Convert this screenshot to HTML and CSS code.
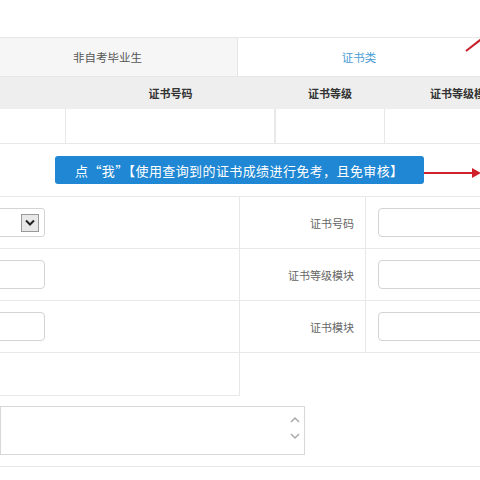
FILE: index.html
```
<!DOCTYPE html>
<html lang="zh">
<head>
    <meta charset="UTF-8">
    <title>证书类免考</title>
    <link rel="stylesheet" href="styles.css">
</head>
<body>
    <div class="page">
        <!-- 标签页 -->
        <div class="tabs">
            <div class="tab">非自考毕业生</div>
            <div class="tab tab-active">证书类</div>
        </div>

        <!-- 查询结果表 -->
        <div class="grid-row grid-head">
            <div class="c1"></div>
            <div class="c2">证书号码</div>
            <div class="c3">证书等级</div>
            <div class="c4">证书等级模块</div>
        </div>
        <div class="grid-row grid-data">
            <div class="c1"></div>
            <div class="c2"></div>
            <div class="c3"></div>
            <div class="c4"></div>
        </div>

        <div class="banner-wrap">
            <div class="banner">点“我”【使用查询到的证书成绩进行免考，且免审核】</div>
        </div>

        <!-- 表单 -->
        <div class="form">
            <div class="form-row">
                <div class="left-cell">
                    <div class="fake-select">
                        <span class="select-btn">
                            <svg width="10" height="7" viewBox="0 0 10 7"><path d="M1 1.5 L5 5.5 L9 1.5" fill="none" stroke="#222" stroke-width="2"/></svg>
                        </span>
                    </div>
                </div>
                <div class="label-cell">证书号码</div>
                <div class="input-cell"><div class="box"></div></div>
            </div>
            <div class="form-row">
                <div class="left-cell"><div class="box box-left"></div></div>
                <div class="label-cell">证书等级模块</div>
                <div class="input-cell"><div class="box"></div></div>
            </div>
            <div class="form-row">
                <div class="left-cell"><div class="box box-left"></div></div>
                <div class="label-cell">证书模块</div>
                <div class="input-cell"><div class="box"></div></div>
            </div>
            <div class="extra-row"></div>
        </div>

        <div class="memo">
            <div class="memo-box">
                <span class="memo-arrows">
                    <svg width="12" height="30" viewBox="0 0 12 30">
                        <path d="M2 9 L6 5 L10 9" fill="none" stroke="#aaa" stroke-width="1.5"/>
                        <path d="M2 21 L6 25 L10 21" fill="none" stroke="#aaa" stroke-width="1.5"/>
                    </svg>
                </span>
            </div>
        </div>
        <div class="bottom-line"></div>

        <!-- 红色箭头标注 -->
        <svg class="marks" width="480" height="480" viewBox="0 0 480 480">
            <path d="M466 51 L484 37" stroke="#c8202a" stroke-width="2" fill="none"/>
            <path d="M424 173 L474 173" stroke="#d0202a" stroke-width="2" fill="none"/>
            <path d="M472 168 L481 173 L472 178 Z" fill="#d0202a"/>
        </svg>
    </div>
</body>
</html>
```

FILE: styles.css
```
* {
    margin: 0;
    padding: 0;
    box-sizing: border-box;
}

body {
    font-family: "Noto Sans CJK SC", "Liberation Sans", sans-serif;
    background-color: #fff;
    color: #555;
    width: 480px;
    height: 480px;
    overflow: hidden;
}

.page {
    position: relative;
    width: 480px;
    height: 480px;
    padding-top: 37px;
}

/* 标签页 */
.tabs {
    display: flex;
    height: 40px;
    border-top: 1px solid #e6e6e6;
    border-bottom: 1px solid #e6e6e6;
}

.tab {
    width: 238px;
    background-color: #f6f6f6;
    border-right: 1px solid #e6e6e6;
    display: flex;
    align-items: center;
    justify-content: center;
    padding-right: 22px;
    font-size: 11.5px;
    color: #555;
}

.tab-active {
    flex: 1;
    background-color: #fff;
    border-right: none;
    padding-right: 0;
    color: #4a9cd3;
}

/* 查询结果表 */
.grid-row {
    display: grid;
    grid-template-columns: 66px 209px 110px 156px;
    width: 541px;
}

.grid-head {
    height: 32px;
    background-color: #eeeeee;
    font-weight: bold;
    font-size: 11px;
    color: #333;
}

.grid-head div {
    display: flex;
    align-items: center;
    justify-content: center;
}

.grid-data {
    height: 35px;
    border-bottom: 1px solid #e8e8e8;
}

.grid-data div {
    border-right: 1px solid #e8e8e8;
}

.grid-data .c3 {
    border-left: 1px solid #e8e8e8;
}

.banner-wrap {
    padding: 12px 0 0 55px;
    height: 53px;
    border-bottom: 1px solid #e8e8e8;
}

.banner {
    width: 369px;
    height: 28px;
    background-color: #1f87d3;
    border-radius: 3px;
    color: #fff;
    font-size: 13px;
    letter-spacing: 0.4px;
    display: flex;
    align-items: center;
    padding-left: 20px;
    white-space: nowrap;
}

/* 表单 */
.form-row {
    display: grid;
    grid-template-columns: 240px 126px 114px;
    height: 52px;
    border-bottom: 1px solid #e8e8e8;
}

.left-cell {
    border-right: 1px solid #e8e8e8;
    display: flex;
    align-items: center;
    justify-content: flex-end;
    padding-right: 194px;
}

.label-cell {
    border-right: 1px solid #e8e8e8;
    display: flex;
    align-items: center;
    justify-content: flex-end;
    padding-right: 11px;
    font-size: 11px;
    color: #666;
}

.input-cell {
    display: flex;
    align-items: center;
    padding-left: 12px;
}

.box {
    width: 120px;
    height: 29px;
    border: 1px solid #d4d4d4;
    border-radius: 4px;
    flex-shrink: 0;
}

.box-left {
    width: 60px;
}

.fake-select {
    width: 60px;
    height: 29px;
    border: 1px solid #d4d4d4;
    border-radius: 3px;
    display: flex;
    align-items: center;
    justify-content: flex-end;
    padding-right: 5px;
    flex-shrink: 0;
}

.select-btn {
    width: 18px;
    height: 18px;
    border: 1px solid #999;
    background-color: #e8e8e8;
    display: flex;
    align-items: center;
    justify-content: center;
}

.extra-row {
    width: 240px;
    height: 43px;
    border-right: 1px solid #e8e8e8;
    border-bottom: 1px solid #e8e8e8;
}

.memo {
    padding-top: 10px;
    height: 70px;
}

.memo-box {
    width: 305px;
    height: 49px;
    border: 1px solid #d8d8d8;
    display: flex;
    justify-content: flex-end;
    align-items: center;
    padding-right: 3px;
}

.bottom-line {
    border-top: 1px solid #e8e8e8;
}

/* 标注箭头 */
.marks {
    position: absolute;
    left: 0;
    top: 0;
}
```
